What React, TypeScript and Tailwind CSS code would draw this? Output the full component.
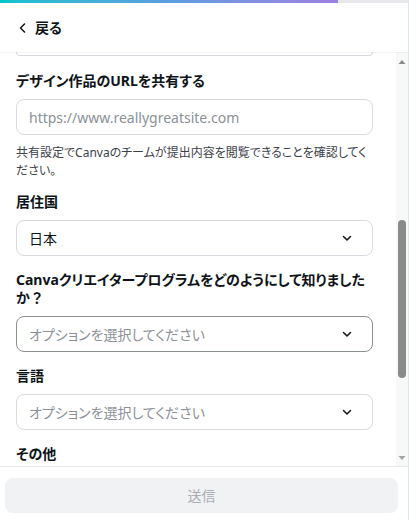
import React from "react";

const font = "font-['Noto_Sans','Noto_Sans_CJK_JP',sans-serif] [font-feature-settings:'palt']";

const Chevron: React.FC = () => (
    <svg width="14" height="14" viewBox="0 0 14 14" fill="none" className="text-[#0e1318]">
        <path d="M3.5 5.5L7 9l3.5-3.5" stroke="currentColor" strokeWidth="1.5" strokeLinecap="round" strokeLinejoin="round" />
    </svg>
);

interface SelectProps {
    value?: string;
    placeholder?: string;
    active?: boolean;
}

const SelectBox: React.FC<SelectProps> = ({ value, placeholder, active = false }) => (
    <div
        className={
            "h-[36px] flex items-center justify-between pl-3 pr-[18px] rounded-lg border bg-white " +
            (active ? "border-[#8b8f96]" : "border-[#d8dbdf]")
        }
    >
        <span className={"text-[14px] " + (value ? "text-[#0e1318]" : "text-[#8c9197]")}>{value ?? placeholder}</span>
        <Chevron />
    </div>
);

const Label: React.FC<{ children: React.ReactNode }> = ({ children }) => (
    <div className="text-[14px] leading-[18px] font-bold text-[#0e1318] mb-[9px]">{children}</div>
);

export default function App() {
    return (
        <div className={"w-[409px] h-[520px] flex flex-col bg-white border-r border-[#e3e5e8] " + font}>
            {/* progress bar */}
            <div className="h-[3px] bg-[#e6e8eb] flex">
                <div className="w-[338px] h-full bg-gradient-to-r from-[#00c4cc] via-[#5a9ee0] to-[#9d7fe3]" />
            </div>

            {/* header */}
            <div className="h-[49px] flex items-center pl-[17px] gap-[6px] bg-white rounded-tr-lg shadow-[0_1px_0_rgba(0,0,0,0.04)] z-10">
                <svg width="12" height="12" viewBox="0 0 12 12" fill="none">
                    <path d="M7.5 2L3.5 6l4 4" stroke="#0e1318" strokeWidth="1.5" strokeLinecap="round" strokeLinejoin="round" />
                </svg>
                <span className="text-[14px] font-bold text-[#0e1318]">戻る</span>
            </div>

            {/* scroll area */}
            <div className="flex-1 flex min-h-0 overflow-hidden">
                <div className="flex-1 pl-4 pr-[23px]">
                    <div className="h-[4px] border-x border-b border-[#d8dbdf] rounded-b-lg mb-4" />

                    <Label>デザイン作品のURLを共有する</Label>
                    <div className="h-[36px] flex items-center px-3 rounded-lg border border-[#d8dbdf]">
                        <span className="text-[14px] text-[#8c9197]">https://www.reallygreatsite.com</span>
                    </div>
                    <p className="mt-[9px] mb-[13px] pr-1 text-[12px] leading-[18px] text-[#3c4148]">
                        共有設定でCanvaのチームが提出内容を閲覧できることを確認してください。
                    </p>

                    <Label>居住国</Label>
                    <SelectBox value="日本" />

                    <div className="mt-[15px]">
                        <Label>
                            Canvaクリエイタープログラムをどのようにして知りました
                            <br />
                            か<span className="[font-feature-settings:normal]">？</span>
                        </Label>
                        <SelectBox placeholder="オプションを選択してください" active />
                    </div>

                    <div className="mt-[15px]">
                        <Label>言語</Label>
                        <SelectBox placeholder="オプションを選択してください" />
                    </div>

                    <div className="mt-[15px]">
                        <Label>その他</Label>
                    </div>
                </div>

                {/* scrollbar */}
                <div className="w-[12px] bg-[#f8f8f8] flex flex-col items-center">
                    <svg width="8" height="6" viewBox="0 0 8 6" className="mt-[7px]">
                        <path d="M4 1L7.5 5H0.5z" fill="#8a8a8a" />
                    </svg>
                    <div className="flex-1 w-full flex flex-col items-center">
                        <div className="h-[155px]" />
                        <div className="w-[8px] h-[158px] rounded-full bg-[#8a8a8a]" />
                    </div>
                    <svg width="8" height="6" viewBox="0 0 8 6" className="mb-[5px]">
                        <path d="M4 5L7.5 1H0.5z" fill="#a3a3a3" />
                    </svg>
                </div>
            </div>

            {/* footer */}
            <div className="h-[54px] border-t border-[#e6e8eb] pt-[11px] px-[5px] pr-[10px]">
                <button className="w-full h-[35px] rounded-lg bg-[#f1f2f4] text-[14px] text-[#a9adb3]">送信</button>
            </div>
        </div>
    );
}
